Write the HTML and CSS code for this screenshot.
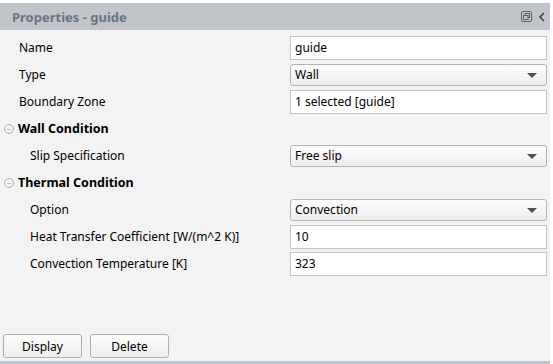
FILE: index.html
```html
<!DOCTYPE html>
<html>
<head>
  <link rel="stylesheet" href="styles.css">
</head>
<body>
  <div class="panel">
    <div class="panel-header">
      <span class="panel-title">Properties - guide</span>
      <span class="header-icons">
        <svg width="11" height="11" viewBox="0 0 11 11">
          <rect x="0.5" y="0.5" width="10" height="10" rx="1.5" fill="none" stroke="#5a626b"/>
          <rect x="4" y="2.5" width="4.5" height="4" fill="none" stroke="#5a626b"/>
          <rect x="2.5" y="4.5" width="4.5" height="4" fill="#c0c5cb" stroke="#5a626b"/>
        </svg>
        <svg width="8" height="10" viewBox="0 0 8 10">
          <path d="M6 1 L2 5 L6 9" fill="none" stroke="#3c434a" stroke-width="1.6"/>
        </svg>
      </span>
    </div>

    <div class="panel-body">
      <div class="row">
        <label>Name</label>
        <div class="field">guide</div>
      </div>
      <div class="row">
        <label>Type</label>
        <div class="select">Wall<span class="arrow"></span></div>
      </div>
      <div class="row">
        <label>Boundary Zone</label>
        <div class="field">1 selected [guide]</div>
      </div>

      <!-- Wall condition group -->
      <div class="group">
        <span class="toggle">&minus;</span> Wall Condition
      </div>
      <div class="row sub">
        <label>Slip Specification</label>
        <div class="select">Free slip<span class="arrow"></span></div>
      </div>

      <!-- Thermal condition group -->
      <div class="group">
        <span class="toggle">&minus;</span> Thermal Condition
      </div>
      <div class="row sub">
        <label>Option</label>
        <div class="select">Convection<span class="arrow"></span></div>
      </div>
      <div class="row sub">
        <label>Heat Transfer Coefficient [W/(m^2 K)]</label>
        <div class="field">10</div>
      </div>
      <div class="row sub">
        <label>Convection Temperature [K]</label>
        <div class="field">323</div>
      </div>
    </div>

    <div class="panel-footer">
      <button type="button">Display</button>
      <button type="button">Delete</button>
    </div>
  </div>
</body>
</html>
```

FILE: styles.css
```css
body {
  margin: 0;
  background-color: #fff;
  font-family: "Noto Sans", "Open Sans", sans-serif;
  font-size: 12px;
  color: #000;
}
.panel {
  width: 550px;
  height: 361px;
  margin-top: 3px;
  background-color: #f3f3f3;
  border-bottom: 3px solid #c0c5cb;
  display: flex;
  flex-direction: column;
  box-sizing: border-box;
}
.panel-header {
  height: 27px;
  background-color: #c0c5cb;
  display: flex;
  align-items: center;
  justify-content: space-between;
  padding: 0 4px 0 12px;
}
.panel-title {
  font-weight: bold;
  font-size: 13px;
  color: #6b7580;
}
.header-icons {
  display: flex;
  align-items: center;
  gap: 6px;
}
.panel-body {
  flex: 1;
  padding-top: 4px;
}
.row {
  display: grid;
  grid-template-columns: 290px 257px;
  align-items: center;
  height: 27px;
}
.row label {
  padding-left: 19px;
}
.row.sub label {
  padding-left: 30px;
}
.field {
  height: 24px;
  box-sizing: border-box;
  background-color: #fff;
  border: 1px solid #bcc6d2;
  padding: 0 4px;
  line-height: 22px;
}
.select {
  position: relative;
  height: 22px;
  box-sizing: border-box;
  background: linear-gradient(#fdfdfd, #eeeeee);
  border: 1px solid #b4b4b4;
  border-radius: 3px;
  padding: 0 4px;
  line-height: 20px;
}
.arrow {
  position: absolute;
  right: 9px;
  top: 8px;
  border-left: 5px solid transparent;
  border-right: 5px solid transparent;
  border-top: 5px solid #505050;
}
.group {
  height: 27px;
  display: flex;
  align-items: center;
  font-weight: bold;
  font-size: 12.5px;
}
.toggle {
  display: inline-block;
  width: 8px;
  height: 8px;
  border: 1px solid #b0b0b0;
  border-radius: 50%;
  font-size: 8px;
  line-height: 8px;
  text-align: center;
  color: #999;
  font-weight: normal;
  margin: 0 4px 0 4px;
}
.panel-footer {
  display: flex;
  gap: 8px;
  padding: 0 0 3px 3px;
}
button {
  width: 79px;
  height: 24px;
  font-family: "Noto Sans", "Open Sans", sans-serif;
  font-size: 12px;
  color: #000;
  background: linear-gradient(#fbfbfb, #efefef);
  border: 1px solid #aeaeae;
  border-radius: 3px;
  padding: 0;
}
```
